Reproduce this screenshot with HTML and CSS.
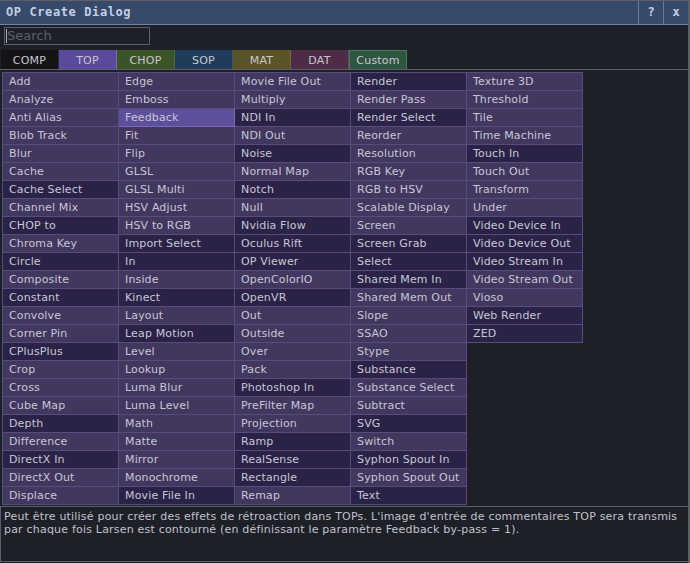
FILE: index.html
```html
<!DOCTYPE html>
<html>
<head>
<meta charset="utf-8">
<title>OP Create Dialog</title>
<link rel="stylesheet" href="styles.css">
</head>
<body>
<div class="dialog">
  <header class="titlebar">
    <span class="title">OP Create Dialog</span>
    <div class="tb-btns">
      <span class="tb-btn">?</span>
      <span class="tb-btn">x</span>
    </div>
  </header>
  <div class="search-row">
    <div class="search"><span class="caret"></span><span class="placeholder">Search</span></div>
  </div>
  <nav class="tabs">
    <span class="tab comp">COMP</span>
    <span class="tab top">TOP</span>
    <span class="tab chop">CHOP</span>
    <span class="tab sop">SOP</span>
    <span class="tab mat">MAT</span>
    <span class="tab dat">DAT</span>
    <span class="tab custom">Custom</span>
  </nav>
  <div class="grid">
    <span class="cell">Add</span>
    <span class="cell">Analyze</span>
    <span class="cell">Anti Alias</span>
    <span class="cell">Blob Track</span>
    <span class="cell">Blur</span>
    <span class="cell">Cache</span>
    <span class="cell gen">Cache Select</span>
    <span class="cell">Channel Mix</span>
    <span class="cell gen">CHOP to</span>
    <span class="cell">Chroma Key</span>
    <span class="cell gen">Circle</span>
    <span class="cell">Composite</span>
    <span class="cell gen">Constant</span>
    <span class="cell">Convolve</span>
    <span class="cell">Corner Pin</span>
    <span class="cell gen">CPlusPlus</span>
    <span class="cell">Crop</span>
    <span class="cell">Cross</span>
    <span class="cell">Cube Map</span>
    <span class="cell gen">Depth</span>
    <span class="cell">Difference</span>
    <span class="cell gen">DirectX In</span>
    <span class="cell">DirectX Out</span>
    <span class="cell">Displace</span>

    <span class="cell">Edge</span>
    <span class="cell">Emboss</span>
    <span class="cell sel">Feedback</span>
    <span class="cell">Fit</span>
    <span class="cell">Flip</span>
    <span class="cell">GLSL</span>
    <span class="cell">GLSL Multi</span>
    <span class="cell">HSV Adjust</span>
    <span class="cell">HSV to RGB</span>
    <span class="cell gen">Import Select</span>
    <span class="cell gen">In</span>
    <span class="cell">Inside</span>
    <span class="cell gen">Kinect</span>
    <span class="cell">Layout</span>
    <span class="cell gen">Leap Motion</span>
    <span class="cell">Level</span>
    <span class="cell">Lookup</span>
    <span class="cell">Luma Blur</span>
    <span class="cell">Luma Level</span>
    <span class="cell">Math</span>
    <span class="cell">Matte</span>
    <span class="cell">Mirror</span>
    <span class="cell">Monochrome</span>
    <span class="cell gen">Movie File In</span>

    <span class="cell">Movie File Out</span>
    <span class="cell">Multiply</span>
    <span class="cell gen">NDI In</span>
    <span class="cell">NDI Out</span>
    <span class="cell gen">Noise</span>
    <span class="cell">Normal Map</span>
    <span class="cell gen">Notch</span>
    <span class="cell">Null</span>
    <span class="cell gen">Nvidia Flow</span>
    <span class="cell gen">Oculus Rift</span>
    <span class="cell gen">OP Viewer</span>
    <span class="cell">OpenColorIO</span>
    <span class="cell gen">OpenVR</span>
    <span class="cell">Out</span>
    <span class="cell">Outside</span>
    <span class="cell">Over</span>
    <span class="cell">Pack</span>
    <span class="cell gen">Photoshop In</span>
    <span class="cell">PreFilter Map</span>
    <span class="cell">Projection</span>
    <span class="cell gen">Ramp</span>
    <span class="cell gen">RealSense</span>
    <span class="cell gen">Rectangle</span>
    <span class="cell">Remap</span>

    <span class="cell gen">Render</span>
    <span class="cell">Render Pass</span>
    <span class="cell gen">Render Select</span>
    <span class="cell">Reorder</span>
    <span class="cell">Resolution</span>
    <span class="cell">RGB Key</span>
    <span class="cell">RGB to HSV</span>
    <span class="cell">Scalable Display</span>
    <span class="cell">Screen</span>
    <span class="cell gen">Screen Grab</span>
    <span class="cell gen">Select</span>
    <span class="cell gen">Shared Mem In</span>
    <span class="cell">Shared Mem Out</span>
    <span class="cell">Slope</span>
    <span class="cell">SSAO</span>
    <span class="cell">Stype</span>
    <span class="cell gen">Substance</span>
    <span class="cell">Substance Select</span>
    <span class="cell">Subtract</span>
    <span class="cell gen">SVG</span>
    <span class="cell">Switch</span>
    <span class="cell gen">Syphon Spout In</span>
    <span class="cell">Syphon Spout Out</span>
    <span class="cell gen">Text</span>

    <span class="cell">Texture 3D</span>
    <span class="cell">Threshold</span>
    <span class="cell">Tile</span>
    <span class="cell">Time Machine</span>
    <span class="cell gen">Touch In</span>
    <span class="cell">Touch Out</span>
    <span class="cell">Transform</span>
    <span class="cell">Under</span>
    <span class="cell gen">Video Device In</span>
    <span class="cell gen">Video Device Out</span>
    <span class="cell gen">Video Stream In</span>
    <span class="cell">Video Stream Out</span>
    <span class="cell">Vioso</span>
    <span class="cell gen">Web Render</span>
    <span class="cell gen">ZED</span>
  </div>
  <div class="desc">Peut être utilisé pour créer des effets de rétroaction dans TOPs. L'image d'entrée de commentaires TOP sera transmis par chaque fois Larsen est contourné (en définissant le paramètre Feedback by-pass = 1).</div>
</div>
</body>
</html>
```
FILE: styles.css
```css
html, body {
  margin: 0;
  padding: 0;
  background: #1e2028;
}
body {
  width: 690px;
  height: 563px;
  overflow: hidden;
  font-family: "DejaVu Sans", sans-serif;
  font-size: 11px;
  color: #c6c4d2;
}
.dialog {
  box-sizing: border-box;
  width: 690px;
  height: 563px;
  border-right: 2px solid #5c5f66;
  display: flex;
  flex-direction: column;
  background: #1e2028;
}
.titlebar {
  box-sizing: border-box;
  height: 25px;
  flex: none;
  display: flex;
  align-items: stretch;
  justify-content: space-between;
  background: #374a6a;
  border-top: 1px solid #5e6068;
  border-bottom: 1px solid #7684a4;
}
.title {
  font-family: "DejaVu Sans Mono", monospace;
  font-weight: bold;
  font-size: 12px;
  letter-spacing: 0.6px;
  color: #c3cfe8;
  padding-left: 6px;
  line-height: 23px;
}
.tb-btns {
  display: flex;
}
.tb-btn {
  width: 24px;
  border-left: 1px solid #6c7a98;
  text-align: center;
  font-family: "DejaVu Sans Mono", monospace;
  font-weight: bold;
  font-size: 12px;
  line-height: 23px;
  color: #c3cfe8;
}
.search-row {
  flex: none;
  padding: 2px 0 5px 4px;
}
.search {
  box-sizing: border-box;
  width: 146px;
  height: 18px;
  border: 1px solid #5d6068;
  display: flex;
  align-items: center;
  padding-left: 1px;
}
.caret {
  width: 1px;
  height: 14px;
  background: #a8aab0;
}
.placeholder {
  font-size: 13px;
  color: #5c606a;
  line-height: 16px;
}
.tabs {
  flex: none;
  display: flex;
  height: 19px;
  padding-left: 1px;
  border-bottom: 1px solid #5c5f66;
}
.tab {
  box-sizing: border-box;
  width: 58px;
  height: 19px;
  text-align: center;
  padding-top: 2px;
  line-height: 17px;
  letter-spacing: 0.2px;
  color: #c8c8cc;
  border-right: 1px solid rgba(255, 255, 255, 0.12);
}
.comp { background: #141417; }
.top { background: #5b4a9b; border-right-color: #7a6ab8; }
.chop { background: #3b5427; }
.sop { background: #1f3d5a; }
.mat { background: #5a5428; }
.dat { background: #4e2c47; }
.custom { background: #2e5540; border: 1px solid #4a7a5e; border-bottom: none; padding-top: 1px; }
.grid {
  flex: none;
  margin: 2px 0 1px 2px;
  display: grid;
  grid-auto-flow: column;
  grid-template-rows: repeat(24, 18px);
  grid-template-columns: repeat(5, 116px);
  width: 580px;
  border-top: 1px solid #574c7a;
  border-left: 1px solid #574c7a;
}
.cell {
  box-sizing: border-box;
  background: #42375f;
  border-right: 1px solid #574c7a;
  border-bottom: 1px solid #574c7a;
  padding-left: 6px;
  padding-top: 1px;
  line-height: 16px;
  letter-spacing: 0.15px;
  white-space: nowrap;
  overflow: hidden;
  color: #c8c6d4;
}
.cell.gen {
  background: #2a2347;
}
.cell.sel {
  background: #5e4f9c;
  border-right-color: #7a6cb8;
  border-bottom-color: #7a6cb8;
}
.desc {
  flex: 1;
  box-sizing: border-box;
  margin: 0 0 1px 0;
  border: 1px solid #5c5f66;
  border-right: none;
  padding: 3px 2px 0 3px;
  line-height: 13px;
  letter-spacing: 0.2px;
  color: #c0c2cc;
}
```
